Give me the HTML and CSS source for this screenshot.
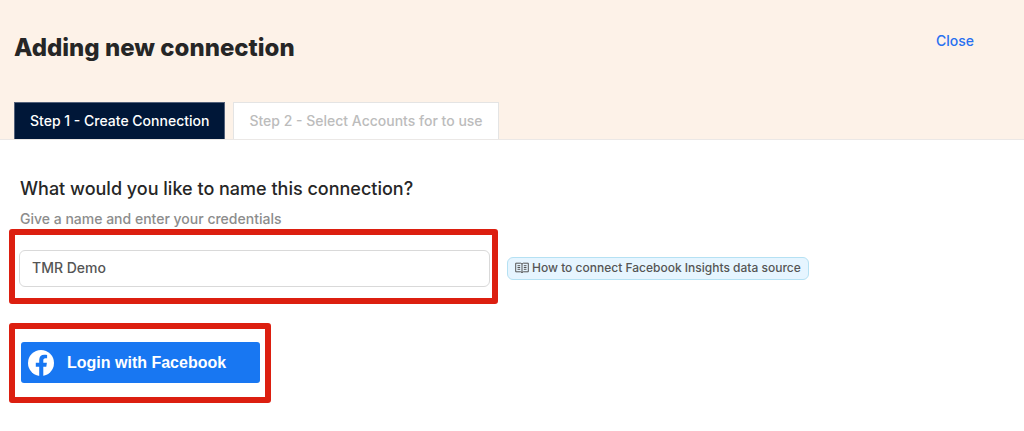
FILE: index.html
```html
<!DOCTYPE html>
<html lang="en">
<head>
<meta charset="utf-8">
<meta name="viewport" content="width=device-width, initial-scale=1">
<title>Adding new connection</title>
<link rel="stylesheet" href="styles.css">
</head>
<body>
<header class="header">
  <div class="title-row">
    <h1 class="title">Adding new connection</h1>
    <a class="close" href="#">Close</a>
  </div>
  <nav class="tabs">
    <button type="button" class="tab tab-active">Step 1 - Create Connection</button>
    <button type="button" class="tab" disabled>Step 2 - Select Accounts for to use</button>
  </nav>
</header>
<main class="main">
  <div class="intro">
    <label class="question" for="name">What would you like to name this connection?</label>
    <p class="hint" id="hint">Give a name and enter your credentials</p>
  </div>
  <div class="name-row">
    <div class="frame frame-name">
      <input class="name-input" id="name" type="text" value="TMR Demo" aria-describedby="hint">
    </div>
    <a class="help" href="#">
      <svg class="book" viewBox="0 0 14 12" aria-hidden="true">
        <path d="M.7 1.200h5L7 2l1.300-.8h5v8.600h-5L7 10.600l-1.300-.8h-5zM7 2v8.600M2.500 3.700h2.700M2.500 5.500h2.700M2.500 7.300h2.700M8.800 3.700h2.700M8.800 5.500h2.700M8.800 7.300h2.700"/>
      </svg>
      <span>How to connect Facebook Insights data source</span>
    </a>
  </div>
  <div class="frame frame-login">
    <button type="button" class="login">
      <svg class="facebook" viewBox="0 0 26 26" aria-hidden="true">
        <circle class="facebook-disc" cx="13" cy="13" r="13"/>
        <path class="facebook-letter" d="M11.200 26v-9.300H7.800v-3.900h3.400V9.900c0-3.400 2-5.200 5-5.200 1.500 0 2.900.2 2.900.2v3.300h-1.700c-1.600 0-2.100 1-2.100 2v2.600h3.600l-.6 3.900h-3V26z"/>
      </svg>
      <span>Login with Facebook</span>
    </button>
  </div>
</main>
</body>
</html>
```
FILE: styles.css
```css
* {
  box-sizing: border-box;
}

body {
  margin: 0;
  background: #fff;
  color: #262626;
  font: 500 14px/20px Inter, "Liberation Sans", sans-serif;
}

.header {
  padding: 31px 14px 0;
  background: #fdf2e8;
  border-bottom: 1px solid #ebe8e6;
}

.title-row {
  display: flex;
  align-items: flex-start;
  justify-content: space-between;
  padding-right: 36px;
}

.title {
  margin: 0;
  font-size: 24px;
  font-weight: 800;
  line-height: 34px;
}

.close {
  color: #2870f0;
  text-decoration: none;
}

.tabs {
  display: flex;
  gap: 8px;
  margin-top: 37px;
}

.tab {
  padding: 4px 15px;
  border: 1px solid #e4e4e4;
  border-bottom: 0;
  background: #fff;
  color: #bcbcbc;
  font: inherit;
  line-height: 28px;
}

.tab-active {
  background: #001738;
  border-color: #53617a;
  color: #fff;
}

.main {
  padding: 36px 9px 24px;
}

.intro {
  padding-left: 11px;
}

.question {
  display: block;
  font-size: 18px;
  line-height: 26px;
}

.hint {
  margin: 7px 0 0;
  color: #8c8c8c;
}

.name-row {
  display: flex;
  align-items: center;
  gap: 9px;
}

.frame {
  border: 6px solid #dc1f10;
  border-radius: 3px;
}

.frame-name {
  flex: 0 1 489px;
  padding: 15px 2px 11px 4px;
}

.name-input {
  display: block;
  width: 100%;
  height: 37px;
  padding: 0 12px 2px;
  border: 1px solid #d9d9d9;
  border-radius: 6px;
  background: #fff;
  color: #555;
  font: inherit;
}

.help {
  display: flex;
  align-items: center;
  gap: 3px;
  margin-top: 4px;
  padding: 0 7px 1px;
  border: 1px solid #b5e1f3;
  border-radius: 6px;
  background: #e6f5ff;
  color: #555;
  font-size: 12px;
  text-decoration: none;
}

.book {
  width: 14px;
  height: 12px;
  fill: none;
  stroke: #555;
  stroke-width: 1;
}

.frame-login {
  width: fit-content;
  margin-top: 19px;
  padding: 13px 5px 14px 6px;
}

.login {
  display: flex;
  align-items: center;
  gap: 13px;
  width: 239px;
  padding: 7px;
  border: 0;
  border-radius: 3px;
  background: #1877f2;
  color: #fff;
  font: 700 16px/27px "Liberation Sans", sans-serif;
}

.facebook {
  width: 26px;
  height: 26px;
}

.facebook-disc {
  fill: #fff;
}

.facebook-letter {
  fill: #1877f2;
}
```
